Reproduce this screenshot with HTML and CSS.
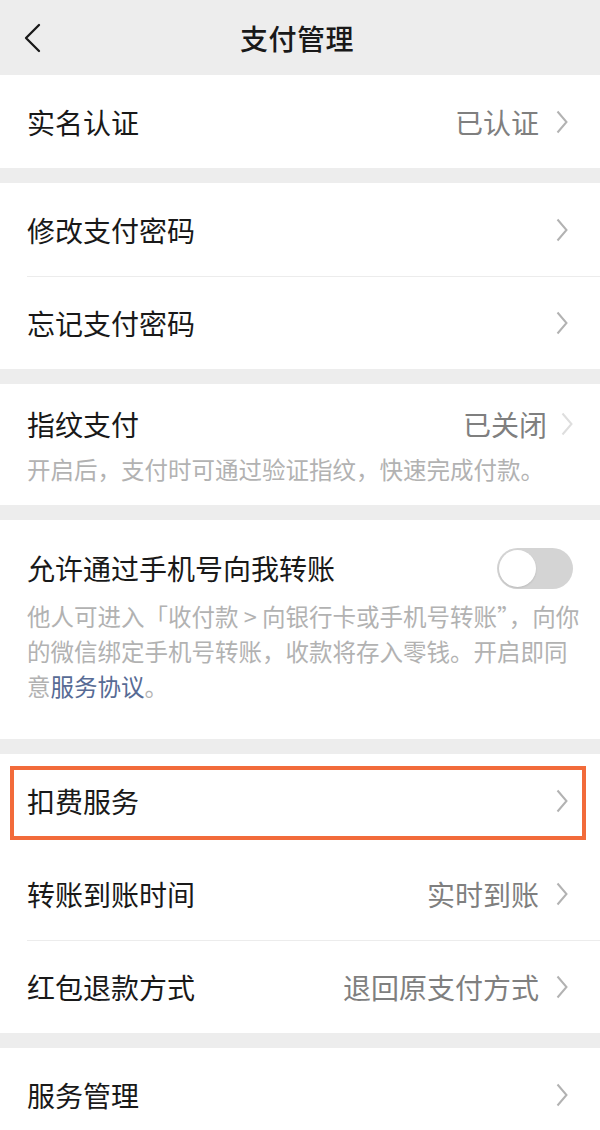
FILE: index.html
```html
<!DOCTYPE html>
<html lang="zh-CN">
<head>
<meta charset="utf-8">
<title>支付管理</title>
<link rel="stylesheet" href="styles.css">
</head>
<body>
<div class="header">
  <svg class="back" width="18" height="30" viewBox="0 0 18 30"><path d="M16 2 L3 15 L16 28" fill="none" stroke="#191919" stroke-width="2.3" stroke-linecap="round" stroke-linejoin="round"/></svg>
  <div class="title">支付管理</div>
  <div></div>
</div>

<div class="group">
  <div class="row"><span class="label">实名认证</span><span class="value">已认证</span><svg class="chev" width="12" height="24" viewBox="0 0 12 24"><path d="M1.5 1.5 L10.5 12 L1.5 22.5" fill="none" stroke="#b2b2b2" stroke-width="2"/></svg></div>
</div>

<div class="group">
  <div class="row"><span class="label">修改支付密码</span><svg class="chev" width="12" height="24" viewBox="0 0 12 24"><path d="M1.5 1.5 L10.5 12 L1.5 22.5" fill="none" stroke="#b2b2b2" stroke-width="2"/></svg></div>
  <div class="row"><span class="label">忘记支付密码</span><svg class="chev" width="12" height="24" viewBox="0 0 12 24"><path d="M1.5 1.5 L10.5 12 L1.5 22.5" fill="none" stroke="#b2b2b2" stroke-width="2"/></svg></div>
</div>

<div class="group block fp">
  <div class="head"><span class="label">指纹支付</span><span class="value">已关闭</span><svg class="chev" width="12" height="24" viewBox="0 0 12 24"><path d="M1.5 1.5 L10.5 12 L1.5 22.5" fill="none" stroke="#dedede" stroke-width="2"/></svg></div>
  <div class="desc">开启后，支付时可通过验证指纹，快速完成付款。</div>
</div>

<div class="group block phone">
  <div class="head"><span class="label">允许通过手机号向我转账</span><span class="toggle"><span class="knob"></span></span></div>
  <div class="desc"><span class="line">他人可进入「收付款 &gt; 向银行卡或手机号转账”，向你</span><span class="line">的微信绑定手机号转账，收款将存入零钱。开启即同</span><span class="line">意<span class="link">服务协议</span>。</span></div>
</div>

<div class="group">
  <div class="row marked"><span class="label">扣费服务</span><svg class="chev" width="12" height="24" viewBox="0 0 12 24"><path d="M1.5 1.5 L10.5 12 L1.5 22.5" fill="none" stroke="#b2b2b2" stroke-width="2"/></svg><span class="mark"></span></div>
  <div class="row plain"><span class="label">转账到账时间</span><span class="value">实时到账</span><svg class="chev" width="12" height="24" viewBox="0 0 12 24"><path d="M1.5 1.5 L10.5 12 L1.5 22.5" fill="none" stroke="#b2b2b2" stroke-width="2"/></svg></div>
  <div class="row"><span class="label">红包退款方式</span><span class="value">退回原支付方式</span><svg class="chev" width="12" height="24" viewBox="0 0 12 24"><path d="M1.5 1.5 L10.5 12 L1.5 22.5" fill="none" stroke="#b2b2b2" stroke-width="2"/></svg></div>
</div>

<div class="group">
  <div class="row"><span class="label">服务管理</span><svg class="chev" width="12" height="24" viewBox="0 0 12 24"><path d="M1.5 1.5 L10.5 12 L1.5 22.5" fill="none" stroke="#b2b2b2" stroke-width="2"/></svg></div>
</div>
</body>
</html>
```

FILE: styles.css
```css
* { box-sizing: border-box; }

body {
  margin: 0;
  width: 600px;
  background: #ededed;
  font-family: "Noto Sans CJK SC", "Noto Sans", sans-serif;
  color: #191919;
}

.header {
  height: 75px;
  display: grid;
  grid-template-columns: 60px 1fr 60px;
  align-items: center;
}

.back {
  margin-left: 23px;
  display: block;
}

.title {
  text-align: center;
  font-size: 28px;
  font-weight: 500;
  letter-spacing: 0.5px;
  margin-left: -6px;
}

.group {
  background: #fff;
  margin-top: 15px;
}

.header + .group {
  margin-top: 0;
}

.row {
  position: relative;
  height: 93px;
  margin-left: 27px;
  padding-right: 32px;
  display: flex;
  align-items: center;
  border-top: 1px solid #ececec;
}

.row:first-child,
.row.plain {
  border-top: none;
}

.label {
  font-size: 28px;
  line-height: 36px;
  flex: 1;
  white-space: nowrap;
}

.value {
  font-size: 28px;
  line-height: 36px;
  color: #7f7f7f;
  margin-right: 17px;
  white-space: nowrap;
}

.chev {
  display: block;
  flex: none;
}

.block {
  padding-left: 27px;
}

.head {
  display: flex;
  align-items: center;
  height: 36px;
}

.desc {
  font-size: 23.5px;
  line-height: 35px;
  color: #b2b2b2;
  white-space: nowrap;
}

.line {
  display: block;
}

.link {
  color: #576b95;
}

.fp {
  padding-top: 22px;
  padding-right: 27px;
  padding-bottom: 18px;
}

.fp .value {
  margin-right: 14px;
}

.fp .desc {
  margin-top: 10px;
}

.phone {
  padding-top: 30px;
  padding-right: 27px;
  padding-bottom: 35px;
}

.phone .desc {
  margin-top: 13px;
}

.toggle {
  width: 76px;
  height: 41px;
  border-radius: 21px;
  background: #d4d4d4;
  padding: 2px;
  display: flex;
  align-items: center;
  flex: none;
}

.knob {
  width: 37px;
  height: 37px;
  border-radius: 50%;
  background: #fff;
  box-shadow: 0 1px 2px rgba(0, 0, 0, 0.12);
}

.mark {
  position: absolute;
  left: -17px;
  right: 14px;
  top: 12px;
  bottom: 7px;
  border: 4px solid #f26b3a;
  pointer-events: none;
}
```
